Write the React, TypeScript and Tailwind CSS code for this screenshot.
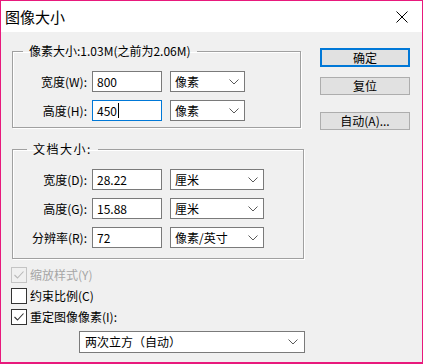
import React from 'react';

const font = "font-['Noto_Sans_CJK_SC','Microsoft_YaHei',sans-serif]";

function Chevron() {
  return (
    <svg width="10" height="6" viewBox="0 0 10 6" className="shrink-0">
      <path d="M0.5 0.5 L5 5 L9.5 0.5" fill="none" stroke="#5a5a5a" strokeWidth="1" />
    </svg>
  );
}

function Select({ text, width }: { text: string; width: string }) {
  return (
    <div className={`${width} h-full bg-white border border-[#7a7a7a] flex items-center justify-between pl-[4px] pr-[5px]`}>
      <span>{text}</span>
      <Chevron />
    </div>
  );
}

function Row({ label, value, unit, unitWidth, focused }: { label: string; value: string; unit: string; unitWidth: string; focused?: boolean }) {
  return (
    <div className="flex items-center h-[21px]">
      <div className="w-[75px] text-right pr-px">{label}</div>
      <div
        className={`ml-[4px] w-[70px] h-full bg-white border flex items-center pl-[4px] ${
          focused ? 'border-[#0078d7]' : 'border-[#7a7a7a]'
        }`}
      >
        <span>{value}</span>
        {focused && <span className="ml-px w-px h-[15px] bg-black" />}
      </div>
      <div className="ml-[8px] h-full">
        <Select text={unit} width={unitWidth} />
      </div>
    </div>
  );
}

function Check({ label, checked, disabled }: { label: React.ReactNode; checked?: boolean; disabled?: boolean }) {
  return (
    <div className="flex items-center h-[21px]">
      <div
        className={`w-[16px] h-[16px] border flex items-center justify-center ${
          disabled ? 'border-[#c4c4c4] bg-[#f0f0f0]' : 'border-[#333] bg-white'
        }`}
      >
        {checked && (
          <svg width="14" height="14" viewBox="0 0 14 14">
            <path d="M2.5 7 L5.5 10 L11.5 3.5" fill="none" stroke={disabled ? '#b8b8b8' : '#333'} strokeWidth="1.1" />
          </svg>
        )}
      </div>
      <span className={`ml-[3px] ${disabled ? 'text-[#a6a6a6]' : 'text-black'}`}>{label}</span>
    </div>
  );
}

const groupCls =
  'border border-[#a0a0a0] shadow-[1px_1px_0_#fff,inset_1px_1px_0_#fff] m-0 p-0';

export default function App() {
  return (
    <div className={`${font} w-[423px] h-[364px] bg-[#f0f0f0] border border-b-2 border-[#e8197c] text-[12px] leading-[16px] text-black flex flex-col overflow-hidden`}>
      {/* TITLE BAR */}
      <div className="h-[31px] bg-white flex items-center justify-between pl-[4px] pr-[14px] shrink-0">
        <span className="text-[15px] leading-[20px]">图像大小</span>
        <svg width="12" height="12" viewBox="0 0 12 12">
          <path d="M0.5 0.5 L11.5 11.5 M11.5 0.5 L0.5 11.5" stroke="#000" strokeWidth="1" />
        </svg>
      </div>

      <div className="flex pl-[10px]">
        {/* LEFT COLUMN */}
        <div className="w-[294px] flex flex-col">
          <fieldset className={`${groupCls} mt-[11px] ml-px w-[289px] pt-[12px] pb-[6px]`}>
            <legend className="ml-[10px] px-[6px] leading-[16px]">像素大小:1.03M(之前为2.06M)</legend>
            <div className="flex flex-col gap-[8px]">
              <Row label="宽度(W):" value="800" unit="像素" unitWidth="w-[75px]" />
              <Row label="高度(H):" value="450" unit="像素" unitWidth="w-[75px]" focused />
            </div>
          </fieldset>

          <fieldset className={`${groupCls} mt-[13px] ml-px w-[292px] pt-[12px] pb-[10px]`}>
            <legend className="ml-[14px] px-[6px] leading-[16px] tracking-[1.5px]">文档大小:</legend>
            <div className="flex flex-col gap-[8px]">
              <Row label="宽度(D):" value="28.22" unit="厘米" unitWidth="w-[94px]" />
              <Row label="高度(G):" value="15.88" unit="厘米" unitWidth="w-[94px]" />
              <Row label="分辨率(R):" value="72" unit="像素/英寸" unitWidth="w-[94px]" />
            </div>
          </fieldset>

          <div className="mt-[5px] flex flex-col">
            <Check label="缩放样式(Y)" checked disabled />
            <Check label="约束比例(C)" />
            <Check label="重定图像像素(I):" checked />
          </div>

          <div className="mt-[4px] ml-[68px] w-[226px] h-[22px] bg-white border border-[#7a7a7a] flex items-center justify-between pl-[5px] pr-[6px]">
            <span>两次立方（自动）</span>
            <Chevron />
          </div>
        </div>

        {/* RIGHT COLUMN */}
        <div className="ml-[15px] pt-[16px] flex flex-col w-[90px]">
          <button className="h-[19px] bg-[#e1e1e1] border-2 border-[#0078d7] flex items-center justify-center leading-[14px]">确定</button>
          <button className="mt-[10px] h-[18px] bg-[#e1e1e1] border border-[#adadad] flex items-center justify-center leading-[14px]">复位</button>
          <button className="mt-[17px] h-[18px] bg-[#e1e1e1] border border-[#adadad] flex items-center justify-center leading-[14px]">自动(A)...</button>
        </div>
      </div>
    </div>
  );
}
